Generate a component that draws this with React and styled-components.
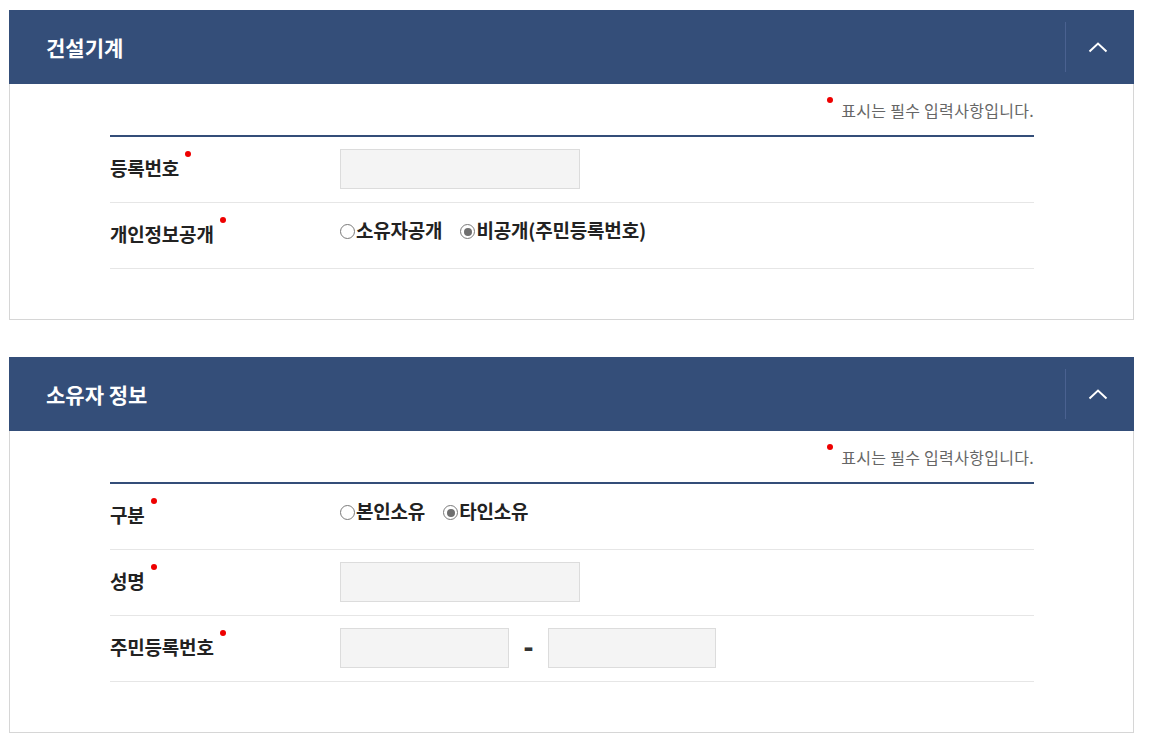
import React from "react";
import styled, { createGlobalStyle } from "styled-components";

const GlobalStyle = createGlobalStyle`
  html, body { margin: 0; padding: 0; background: #fff; }
  body { font-family: "Noto Sans CJK KR", "Noto Sans", sans-serif; color: #222; }
`;

const Page = styled.div`
  width: 1125px;
  padding: 10px 0 0 9px;
  display: flex;
  flex-direction: column;
  gap: 37px;
`;

const Panel = styled.section`
  display: flex;
  flex-direction: column;
`;

const Header = styled.div`
  height: 74px;
  background: #344e79;
  display: flex;
  align-items: center;
  justify-content: space-between;
  padding-left: 37px;
`;

const Title = styled.h2`
  margin: 0;
  font-size: 21px;
  font-weight: 700;
  color: #fff;
  letter-spacing: 0;
  line-height: 1;
`;

const ToggleButton = styled.button`
  width: 69px;
  height: 50px;
  border: 0;
  border-left: 1px solid #4a6190;
  background: transparent;
  display: flex;
  align-items: center;
  justify-content: center;
  padding: 0 4px 0 0;
  cursor: pointer;
`;

const Body = styled.div`
  border: 1px solid #d6d6d6;
  border-top: 0;
  padding: 15px 99px 50px 100px;
`;

const Note = styled.p`
  margin: 0;
  display: flex;
  justify-content: flex-end;
  align-items: flex-start;
  font-size: 16px;
  color: #666;
  line-height: 22px;
  height: 36px;
  letter-spacing: 0.3px;
`;

const Dot = styled.span`
  display: inline-block;
  width: 6px;
  height: 6px;
  border-radius: 50%;
  background: #ee0000;
  flex: none;
  margin: ${(p) => p.$m || "0"};
`;

const Table = styled.div`
  border-top: 2px solid #344e79;
`;

const Row = styled.div`
  display: grid;
  grid-template-columns: 230px 1fr;
  align-items: center;
  height: 65px;
  border-bottom: 1px solid #e6e6e6;
`;

const Label = styled.div`
  display: flex;
  align-items: flex-start;
  font-size: 19px;
  font-weight: 700;
  color: #222;
  letter-spacing: -0.2px;
  line-height: 26px;
  padding-bottom: 4px;
`;

const Field = styled.div`
  display: flex;
  align-items: center;
  padding-bottom: 2px;
`;

const Input = styled.input`
  box-sizing: border-box;
  width: ${(p) => p.$w}px;
  height: 40px;
  background: #f4f4f4;
  border: 1px solid #dcdcdc;
  padding: 0 10px;
  outline: none;
  font-family: inherit;
`;

const Dash = styled.span`
  width: 39px;
  display: flex;
  justify-content: center;
  font-family: "Liberation Sans", Arial, sans-serif;
  font-size: 30px;
  line-height: 30px;
  font-weight: 700;
  color: #333;
  padding-bottom: 2px;
`;

const RadioGroup = styled.div`
  display: flex;
  align-items: center;
  gap: 18px;
  padding-bottom: 11px;
`;

const RadioOption = styled.label`
  display: flex;
  align-items: center;
  font-size: 19px;
  font-weight: 700;
  color: #222;
  letter-spacing: -0.2px;
  line-height: 26px;
  cursor: pointer;
`;

const RadioMark = styled.span`
  box-sizing: border-box;
  width: 15px;
  height: 15px;
  border-radius: 50%;
  border: 1px solid #7a7a7a;
  background: #fff;
  margin: 3px 1px 0 0;
  display: flex;
  align-items: center;
  justify-content: center;
  &::after {
    content: "";
    width: 8px;
    height: 8px;
    border-radius: 50%;
    background: ${(p) => (p.$checked ? "#6f6f6f" : "transparent")};
  }
`;

const Chevron = () => (
  <svg width="20" height="12" viewBox="0 0 20 12" fill="none">
    <polyline points="1.5,10.5 10,2.5 18.5,10.5" stroke="#fff" strokeWidth="2" />
  </svg>
);

const RequiredLabel = ({ children }) => (
  <Label>
    {children}
    <Dot $m="-4px 0 0 6px" />
  </Label>
);

const Radio = ({ checked, children }) => (
  <RadioOption>
    <RadioMark $checked={checked} />
    {children}
  </RadioOption>
);

const SectionPanel = ({ title, children }) => (
  <Panel>
    <Header>
      <Title>{title}</Title>
      <ToggleButton aria-label="접기">
        <Chevron />
      </ToggleButton>
    </Header>
    <Body>
      <Note>
        <Dot $m="-2px 8px 0 0" />
        표시는 필수 입력사항입니다.
      </Note>
      <Table>{children}</Table>
    </Body>
  </Panel>
);

export default function App() {
  return (
    <>
      <GlobalStyle />
      <Page>
        <SectionPanel title="건설기계">
          <Row>
            <RequiredLabel>등록번호</RequiredLabel>
            <Field>
              <Input $w={240} />
            </Field>
          </Row>
          <Row>
            <RequiredLabel>개인정보공개</RequiredLabel>
            <RadioGroup>
              <Radio>소유자공개</Radio>
              <Radio checked>비공개(주민등록번호)</Radio>
            </RadioGroup>
          </Row>
        </SectionPanel>
        <SectionPanel title="소유자 정보">
          <Row>
            <RequiredLabel>구분</RequiredLabel>
            <RadioGroup>
              <Radio>본인소유</Radio>
              <Radio checked>타인소유</Radio>
            </RadioGroup>
          </Row>
          <Row>
            <RequiredLabel>성명</RequiredLabel>
            <Field>
              <Input $w={240} />
            </Field>
          </Row>
          <Row>
            <RequiredLabel>주민등록번호</RequiredLabel>
            <Field>
              <Input $w={169} />
              <Dash>-</Dash>
              <Input $w={168} />
            </Field>
          </Row>
        </SectionPanel>
      </Page>
    </>
  );
}
